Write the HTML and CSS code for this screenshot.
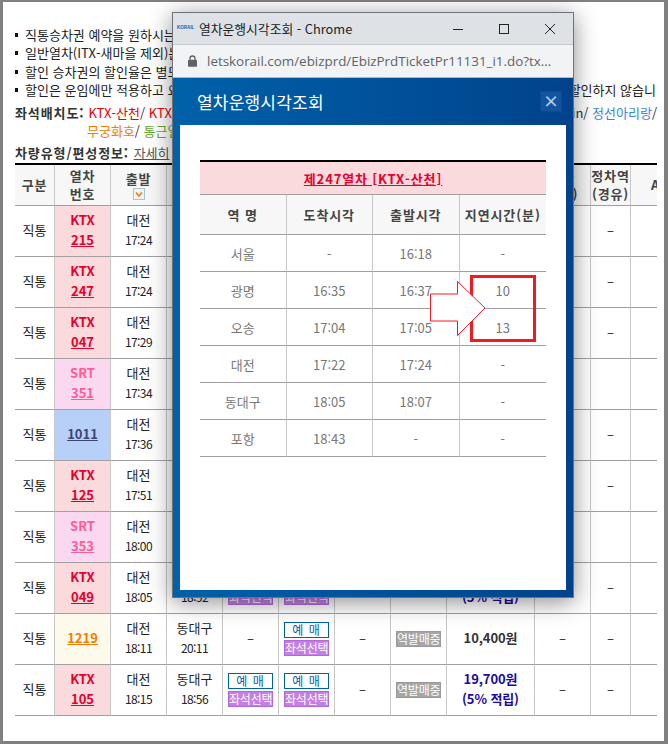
FILE: index.html
```html
<!DOCTYPE html>
<html lang="ko">
<head>
<meta charset="utf-8">
<title>열차운행시각조회</title>
<link rel="stylesheet" href="styles.css">
</head>
<body>
<main class="page">
  <ul class="notes">
    <li><span>직통승차권 예약을 원하시는 고객께서는 예매 버튼을 눌러 주십시오.</span></li>
    <li><span>일반열차(ITX-새마을 제외)는 좌석선택이 되지 않습니다.</span></li>
    <li><span>할인 승차권의 할인율은 별도로 안내하여 드립니다.</span></li>
    <li><span>할인은 운임에만 적용하고 요금은</span><span class="note-end">할인하지 않습니</span></li>
  </ul>
  <div class="seats">
    <div class="seats-line">
      <b class="label">좌석배치도:</b>
      <span><a class="red">KTX-산천</a>/ <a class="red">KTX</a></span>
      <span class="seats-end">in/ <a class="blue">정선아리랑</a>/</span>
    </div>
    <div class="seats-line second">
      <a class="orange">무궁화호</a><span>/&nbsp;</span><a class="green">통근열차</a>
    </div>
  </div>
  <div class="vehicle"><b class="label">차량유형/편성정보:</b> <a class="more">자세히</a></div>

  <table class="trains">
    <colgroup>
      <col class="c40"><col class="c56"><col class="c56"><col class="c56"><col class="c56"><col class="c56"><col class="c56"><col class="c56"><col class="c88"><col class="c56"><col class="c40"><col class="c26">
    </colgroup>
    <thead>
      <tr>
        <th>구분</th>
        <th>열차<br>번호</th>
        <th class="sort">출발<span class="sort-box"><svg width="12" height="12" viewBox="0 0 12 12"><rect x=".5" y=".5" width="11" height="11" fill="#f4f4f4" stroke="#a9c2d8"/><path d="M3 4.500 6 8l3-3.500" fill="none" stroke="#f08000" stroke-width="1.600"/></svg></span></th>
        <th>도착</th><th>특실</th><th>일반실</th><th>입석</th><th>예약</th><th>운임</th>
        <th>환승<br>여부)</th>
        <th>정차역<br>(경유)</th>
        <th class="clip">A</th>
      </tr>
    </thead>
    <tbody>
      <tr><td>직통</td><td class="ktx"><b>KTX</b><br><a>215</a></td><td>대전<br><i>17:24</i></td><td></td><td></td><td></td><td></td><td></td><td></td><td></td><td>–</td><td></td></tr>
      <tr><td>직통</td><td class="ktx"><b>KTX</b><br><a>247</a></td><td>대전<br><i>17:24</i></td><td></td><td></td><td></td><td></td><td></td><td></td><td></td><td>–</td><td></td></tr>
      <tr><td>직통</td><td class="ktx"><b>KTX</b><br><a>047</a></td><td>대전<br><i>17:29</i></td><td></td><td></td><td></td><td></td><td></td><td></td><td></td><td>–</td><td></td></tr>
      <tr><td>직통</td><td class="srt"><b>SRT</b><br><a>351</a></td><td>대전<br><i>17:34</i></td><td></td><td></td><td></td><td></td><td></td><td></td><td></td><td></td><td></td></tr>
      <tr><td>직통</td><td class="itx"><a>1011</a></td><td>대전<br><i>17:36</i></td><td></td><td></td><td></td><td></td><td></td><td></td><td></td><td>–</td><td></td></tr>
      <tr><td>직통</td><td class="ktx"><b>KTX</b><br><a>125</a></td><td>대전<br><i>17:51</i></td><td></td><td></td><td></td><td></td><td></td><td></td><td></td><td>–</td><td></td></tr>
      <tr><td>직통</td><td class="srt"><b>SRT</b><br><a>353</a></td><td>대전<br><i>18:00</i></td><td></td><td></td><td></td><td></td><td></td><td></td><td></td><td></td><td></td></tr>
      <tr><td>직통</td><td class="ktx"><b>KTX</b><br><a>049</a></td><td>대전<br><i>18:05</i></td><td>동대구<br><i>18:52</i></td>
        <td class="acts"><span class="btn buy">예 매</span><span class="btn pick">좌석선택</span></td><td class="acts"><span class="btn buy">예 매</span><span class="btn pick">좌석선택</span></td><td>–</td><td class="acts"><span class="btn sold">역발매중</span></td><td class="fare">19,700원<br>(5% 적립)</td><td>–</td><td>–</td><td></td></tr>
      <tr><td>직통</td><td class="mugung"><a>1219</a></td><td>대전<br><i>18:11</i></td><td>동대구<br><i>20:11</i></td>
        <td>–</td><td class="acts"><span class="btn buy">예 매</span><span class="btn pick">좌석선택</span></td><td>–</td><td class="acts"><span class="btn sold">역발매중</span></td><td class="fare plain">10,400원</td><td>–</td><td>–</td><td></td></tr>
      <tr><td>직통</td><td class="ktx"><b>KTX</b><br><a>105</a></td><td>대전<br><i>18:15</i></td><td>동대구<br><i>18:56</i></td>
        <td class="acts"><span class="btn buy">예 매</span><span class="btn pick">좌석선택</span></td><td class="acts"><span class="btn buy">예 매</span><span class="btn pick">좌석선택</span></td><td>–</td><td class="acts"><span class="btn sold">역발매중</span></td><td class="fare">19,700원<br>(5% 적립)</td><td>–</td><td>–</td><td></td></tr>
    </tbody>
  </table>
</main>

<section class="window">
  <header class="titlebar">
    <span class="logo">KORAIL</span>
    <span class="win-title">열차운행시각조회 - Chrome</span>
    <span class="controls">
      <svg width="10" height="10" viewBox="0 0 10 10"><path d="M0 5.500h10" stroke="#222" fill="none"/></svg>
      <svg width="10" height="10" viewBox="0 0 10 10"><rect x=".5" y=".5" width="9" height="9" stroke="#222" fill="none"/></svg>
      <svg width="10" height="10" viewBox="0 0 10 10"><path d="M0 0l10 10M10 0L0 10" stroke="#222" fill="none"/></svg>
    </span>
  </header>
  <div class="addressbar">
    <svg width="9" height="12" viewBox="0 0 9 12"><path d="M2 5V3.500a2.500 2.500 0 0 1 5 0V5" fill="none" stroke="#5f6368" stroke-width="1.300"/><rect x="0" y="4.800" width="9" height="7" rx="1" fill="#5f6368"/></svg>
    <span class="url">letskorail.com/ebizprd/EbizPrdTicketPr11131_i1.do?tx...</span>
  </div>
  <div class="modal">
    <div class="modal-head">
      <h1>열차운행시각조회</h1>
      <span class="close">×</span>
    </div>
    <div class="panel">
      <table class="stops">
        <thead>
          <tr><th colspan="4" class="stops-title"><a>제247열차 [KTX-산천]</a></th></tr>
          <tr class="stops-head"><th>역 명</th><th>도착시각</th><th>출발시각</th><th>지연시간(분)</th></tr>
        </thead>
        <tbody>
          <tr><td>서울</td><td>-</td><td>16:18</td><td>-</td></tr>
          <tr><td>광명</td><td>16:35</td><td>16:37</td><td>10</td></tr>
          <tr><td>오송</td><td>17:04</td><td>17:05</td><td>13</td></tr>
          <tr><td>대전</td><td>17:22</td><td>17:24</td><td>-</td></tr>
          <tr><td>동대구</td><td>18:05</td><td>18:07</td><td>-</td></tr>
          <tr><td>포항</td><td>18:43</td><td>-</td><td>-</td></tr>
        </tbody>
      </table>
    </div>
  </div>
</section>

<div class="redbox"></div>
<svg class="arrow" width="56" height="56" viewBox="0 0 56 56"><path d="M.5 13V40H27.500V54.500L55 27 27.500.5V13Z" fill="#fff" stroke="#ed1c24"/></svg>
</body>
</html>
```
FILE: styles.css
```css
* { box-sizing: border-box; }
html, body { margin: 0; height: 744px; overflow: hidden; }
body {
  background: #808080;
  padding: 2px 4px 3px 3px;
  font-family: "Noto Sans CJK KR", "Liberation Sans", sans-serif;
  font-size: 13px;
  color: #333;
}
a { text-decoration: none; }
.page { background: #fff; height: 100%; padding: 24px 7px 0 12px; overflow: hidden; }

.notes { list-style: none; margin: 0; padding: 0; }
.notes li { display: flex; justify-content: space-between; height: 18.3px; line-height: 18.3px; padding-left: 10px; position: relative; color: #222; white-space: nowrap; }
.notes li::before { content: ""; position: absolute; left: 0; top: 7px; width: 3px; height: 4px; background: #111; }
.note-end { margin-right: 1px; }

.seats { margin-top: 5px; }
.seats-line { display: flex; height: 18px; line-height: 18px; white-space: pre; }
.second { padding-left: 72px; }
.label { font-weight: 700; color: #333; letter-spacing: .9px; }
.seats-line .label { margin-right: 4px; }
.seats-end { margin-left: auto; }
.red { color: #e60000; }
.blue { color: #3a86d8; }
.orange { color: #f57c00; }
.green { color: #6aa82c; }

.vehicle { margin-top: 4px; height: 18px; line-height: 18px; }
.more { color: #555; text-decoration: underline; margin-left: 1px; }

.trains { width: 642px; table-layout: fixed; border-collapse: separate; border-spacing: 0; border-top: 2px solid #000; margin-top: 1px; }
.c40 { width: 40px; }
.c56 { width: 56px; }
.c88 { width: 88px; }
.c26 { width: 26px; }
.trains th, .trains td { border-right: 1px solid #c8c8c8; border-bottom: 1px solid #a0a0a0; text-align: center; padding: 0; overflow: hidden; white-space: nowrap; }
.trains th:last-child, .trains td:last-child { border-right: 0; }
.trains th { height: 41px; line-height: 18px; background: #f7f7f7; color: #444; font-weight: 700; letter-spacing: .8px; }
.trains td { height: 51px; line-height: 20px; color: #222; padding-bottom: 2px; }
.trains td.acts { padding-bottom: 0; }
.trains i { font-style: normal; font-size: 12px; letter-spacing: -.6px; }
.trains .sort { padding-bottom: 1px; }
.sort-box { display: block; height: 12px; line-height: 0; }
.clip { text-indent: 20px; text-align: left !important; }
.trains .ktx { background: #fadadd; color: #e6002d; }
.trains .srt { background: #fad8ef; color: #ff5c96; }
.trains .itx { background: #b7d0f7; color: #3a4670; }
.trains .mugung { background: #fdfaeb; color: #f57c00; }
.trains td a { font-weight: 700; color: inherit; text-decoration: underline; }
.btn { display: block; width: 45px; height: 16px; margin: 0 auto; line-height: 14px; font-size: 12px; border: 1px solid; letter-spacing: -.2px; }
.buy { background: #fff; border-color: #0060a8; color: #0060a8; letter-spacing: 1px; }
.pick { background: #c47fe4; border-color: #b268dc; color: #fff; margin-top: 2px; }
.sold { background: #a6a6a6; border-color: #999; color: #fff; }
.trains .fare { color: #1c0a9c; font-weight: 700; letter-spacing: -.1px; }
.trains .plain { color: #333; }

.window { position: absolute; left: 172px; top: 12px; width: 402px; height: 586px; border: 1px solid #6e7276; display: flex; flex-direction: column; background: #dee1e6; box-shadow: 0 4px 22px rgba(0, 0, 0, .45); }
.titlebar { height: 31px; flex: none; background: #dee1e6; display: flex; align-items: center; padding-left: 4px; color: #222; }
.logo { width: 17px; margin-right: 5px; font-size: 4.500px; font-weight: 700; color: #0b5fb0; line-height: 1; font-family: "Liberation Sans", sans-serif; }
.win-title { font-size: 12.800px; }
.controls { margin-left: auto; display: flex; align-items: center; gap: 36px; padding-right: 18px; }
.addressbar { height: 34px; flex: none; background: #f1f3f4; border-top: 1px solid #c5c8cc; border-bottom: 1px solid #b4b7ba; display: flex; align-items: center; gap: 10px; padding-left: 15px; }
.url { font-family: "Open Sans", sans-serif; font-size: 13.400px; color: #5f6368; white-space: nowrap; }

.modal { flex: 1; display: flex; flex-direction: column; padding: 0 7px 7px; background: linear-gradient(90deg, #0061a9, #00438c); }
.modal-head { height: 47px; flex: none; display: flex; align-items: center; justify-content: space-between; padding: 0 4px 1px 17px; }
.modal-head h1 { margin: 0; font-size: 17px; font-weight: 400; color: #fff; letter-spacing: .2px; }
.close { width: 22px; height: 21px; background: #13539f; border: 1px solid #0e4a92; color: #b9c9e0; text-align: center; line-height: 17px; font-size: 16px; font-weight: 700; }
.panel { flex: 1; background: #fff; padding: 35px 19px 0 20px; }

.stops { width: 346px; table-layout: fixed; border-collapse: separate; border-spacing: 0; border-top: 2px solid #000; }
.stops th, .stops td { text-align: center; padding: 0; border-bottom: 1px solid #a0a0a0; border-right: 1px solid #c8c8c8; }
.stops th:last-child, .stops td:last-child { border-right: 0; }
.stops td { height: 37px; color: #777; }
.stops-title { height: 33px; background: #fadadd; }
.stops-title a { color: #e6002d; text-decoration: underline; font-weight: 700; letter-spacing: .85px; }
.stops-head th { height: 40px; background: #f7f7f7; color: #444; font-weight: 700; letter-spacing: .9px; }

.redbox { position: absolute; left: 470px; top: 275px; width: 66px; height: 67px; border: 3px solid #ed1c24; }
.arrow { position: absolute; left: 430px; top: 281px; }
```
